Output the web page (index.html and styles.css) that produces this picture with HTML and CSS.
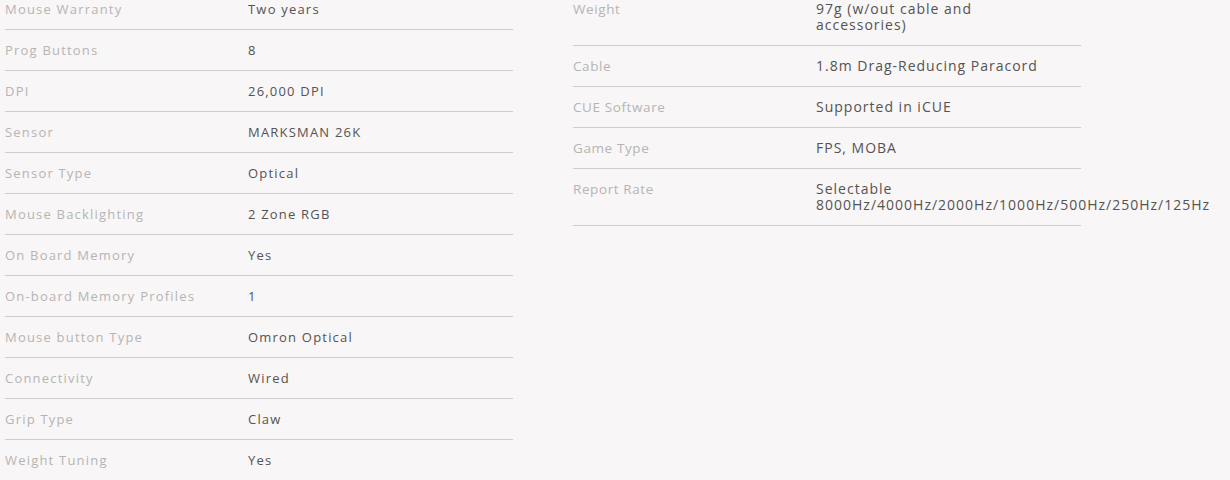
FILE: index.html
```html
<!DOCTYPE html>
<html>
<head>
<meta charset="utf-8">
<link rel="stylesheet" href="styles.css">
</head>
<body>
<div class="specs">
  <div class="col">
    <div class="row"><div class="label">Mouse Warranty</div><div class="value">Two years</div></div>
    <div class="row"><div class="label">Prog Buttons</div><div class="value">8</div></div>
    <div class="row"><div class="label">DPI</div><div class="value">26,000 DPI</div></div>
    <div class="row"><div class="label">Sensor</div><div class="value">MARKSMAN 26K</div></div>
    <div class="row"><div class="label">Sensor Type</div><div class="value">Optical</div></div>
    <div class="row"><div class="label">Mouse Backlighting</div><div class="value">2 Zone RGB</div></div>
    <div class="row"><div class="label">On Board Memory</div><div class="value">Yes</div></div>
    <div class="row"><div class="label">On-board Memory Profiles</div><div class="value">1</div></div>
    <div class="row"><div class="label">Mouse button Type</div><div class="value">Omron Optical</div></div>
    <div class="row"><div class="label">Connectivity</div><div class="value">Wired</div></div>
    <div class="row"><div class="label">Grip Type</div><div class="value">Claw</div></div>
    <div class="row"><div class="label">Weight Tuning</div><div class="value">Yes</div></div>
  </div>
  <div class="col col-right">
    <div class="row"><div class="label">Weight</div><div class="value">97g (w/out cable and accessories)</div></div>
    <div class="row"><div class="label">Cable</div><div class="value">1.8m Drag-Reducing Paracord</div></div>
    <div class="row"><div class="label">CUE Software</div><div class="value">Supported in iCUE</div></div>
    <div class="row"><div class="label">Game Type</div><div class="value">FPS, MOBA</div></div>
    <div class="row"><div class="label">Report Rate</div><div class="value">Selectable <span class="nowrap">8000Hz/4000Hz/2000Hz/1000Hz/500Hz/250Hz/125Hz</span></div></div>
  </div>
</div>
</body>
</html>
```
FILE: styles.css
```css
html, body {
  margin: 0;
  padding: 0;
  background: #f8f6f6;
  overflow: hidden;
}
body {
  font-family: "Open Sans", "Liberation Sans", sans-serif;
  font-size: 13px;
}
.specs {
  display: flex;
  align-items: flex-start;
  gap: 60px;
  margin-top: -11px;
  padding-left: 5px;
}
.col {
  width: 508px;
  flex: none;
}
.row {
  display: flex;
  border-bottom: 1px solid #cfcdcd;
  padding: 12px 0;
  line-height: 16px;
}
.label {
  width: 243px;
  flex: none;
  color: #b7b4b4;
  letter-spacing: 1.2px;
}
.value {
  width: 230px;
  color: #555353;
  letter-spacing: 1.2px;
}
.col-right .label {
  font-size: 13.5px;
  letter-spacing: 0.6px;
}
.col-right .value {
  width: 232px;
  font-size: 14px;
  letter-spacing: 1px;
}
.nowrap {
  white-space: nowrap;
}
```
